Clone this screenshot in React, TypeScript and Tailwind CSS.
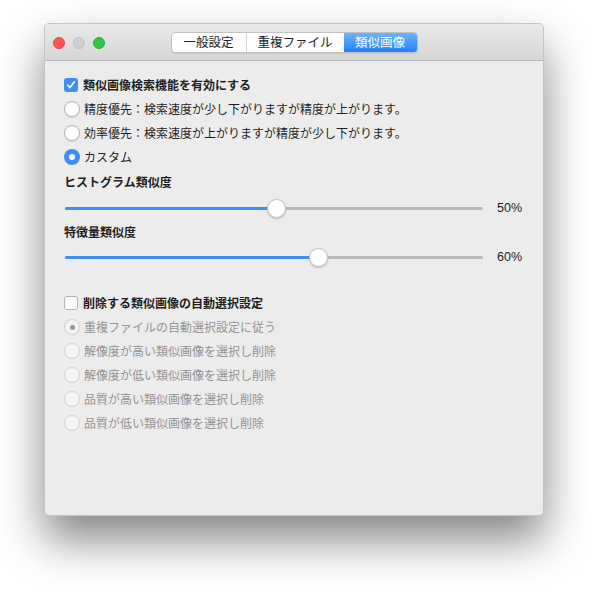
import { useState } from 'react'

const font = { fontFamily: '"Noto Sans CJK JP", "Liberation Sans", sans-serif' }

function Radio({ checked, disabled }: { checked?: boolean; disabled?: boolean }) {
  if (disabled) {
    return (
      <span className="w-[16px] h-[16px] rounded-full border border-[#d0d0d0] bg-[#f4f4f4] flex items-center justify-center shrink-0">
        {checked && <span className="w-[5px] h-[5px] rounded-full bg-[#969696]" />}
      </span>
    )
  }
  if (checked) {
    return (
      <span className="w-[16px] h-[16px] rounded-full bg-[#3d8ff7] flex items-center justify-center shrink-0">
        <span className="w-[6px] h-[6px] rounded-full bg-white" />
      </span>
    )
  }
  return (
    <span className="w-[16px] h-[16px] rounded-full border border-[#b2b2b2] bg-white shadow-[0_1px_1px_rgba(0,0,0,0.08)] shrink-0" />
  )
}

function Checkbox({ checked }: { checked?: boolean }) {
  if (checked) {
    return (
      <span className="w-[14px] h-[14px] rounded-[3px] bg-[#3d8ff7] flex items-center justify-center shrink-0">
        <svg width="10" height="10" viewBox="0 0 10 10">
          <path d="M1.8 5.2 L4 7.6 L8.4 1.8" stroke="white" strokeWidth="1.6" fill="none" strokeLinecap="round" strokeLinejoin="round" />
        </svg>
      </span>
    )
  }
  return <span className="w-[14px] h-[14px] rounded-[3px] border border-[#b2b2b2] bg-white shrink-0" />
}

function Slider({ value }: { value: number }) {
  return (
    <div className="flex items-center h-[20px]">
      <div className="relative w-[418px] h-[20px] flex items-center">
        <div className="w-full h-[3px] rounded-full bg-[#b9b9b9]" />
        <div className="absolute left-0 h-[3px] rounded-full bg-[#3d8ff7]" style={{ width: `${value}%` }} />
        <div
          className="absolute w-[19px] h-[19px] rounded-full bg-white border border-[#c4c4c4] shadow-[0_1px_2px_rgba(0,0,0,0.2)]"
          style={{ left: `calc(${value}% - 7px)` }}
        />
      </div>
      <span className="ml-[14px] text-[12.5px] text-[#1d1d1d]" style={{ fontFamily: '"Liberation Sans", sans-serif' }}>
        {value}%
      </span>
    </div>
  )
}

export default function App() {
  const [tab] = useState('類似画像')
  const tabs = ['一般設定', '重複ファイル', '類似画像']

  return (
    <div className="w-[592px] h-[598px] bg-white pt-[23px] pl-[44px]" style={font}>
      <div className="w-[500px] h-[493px] rounded-[5px] bg-[#ececec] border border-[#c4c4c4] shadow-[0_24px_45px_rgba(0,0,0,0.48)] overflow-hidden flex flex-col">
        {/* title bar */}
        <div className="relative h-[37px] shrink-0 bg-gradient-to-b from-[#ebebeb] to-[#d5d5d5] border-b border-[#b8b8b8] flex items-center justify-center">
          <div className="absolute left-[8px] top-[13px] flex gap-[8px]">
            <span className="w-[12px] h-[12px] rounded-full bg-[#fc5753] border border-[#e0443e]" />
            <span className="w-[12px] h-[12px] rounded-full bg-[#d0d0d0] border border-[#c0c0c0]" />
            <span className="w-[12px] h-[12px] rounded-full bg-[#33c748] border border-[#27aa35]" />
          </div>
          <div className="flex h-[21px] rounded-[4px] border border-[#c2c2c2] bg-white shadow-[0_1px_1px_rgba(0,0,0,0.08)] overflow-hidden mt-[1px]">
            {tabs.map((t, i) => (
              <div
                key={t}
                className={`flex items-center justify-center text-[12.5px] ${
                  i === 0 ? 'w-[74px]' : i === 1 ? 'w-[98px] border-l border-[#d6d6d6]' : 'w-[73px]'
                } ${tab === t ? 'bg-gradient-to-b from-[#6cb3fa] to-[#1a82fb] text-white' : 'text-[#222]'}`}
              >
                {t}
              </div>
            ))}
          </div>
        </div>

        {/* content */}
        <div className="pl-[19px] pt-[17px] text-[12px] text-[#1e1e1e]">
          <label className="flex items-center gap-[5px] h-[14px] font-bold">
            <Checkbox checked />
            <span>類似画像検索機能を有効にする</span>
          </label>
          <div className="mt-[9px] flex flex-col gap-[8px]">
            <div className="flex items-center gap-[4px] h-[16px]">
              <Radio />
              <span>精度優先：検索速度が少し下がりますが精度が上がります。</span>
            </div>
            <div className="flex items-center gap-[4px] h-[16px]">
              <Radio />
              <span>効率優先：検索速度が上がりますが精度が少し下がります。</span>
            </div>
            <div className="flex items-center gap-[4px] h-[16px]">
              <Radio checked />
              <span>カスタム</span>
            </div>
          </div>

          <div className="mt-[9px] font-bold h-[16px] flex items-center">ヒストグラム類似度</div>
          <div className="mt-[8px] ml-[1px]">
            <Slider value={50} />
          </div>
          <div className="mt-[6px] font-bold h-[16px] flex items-center">特徴量類似度</div>
          <div className="mt-[7px] ml-[1px]">
            <Slider value={60} />
          </div>

          <label className="mt-[29px] flex items-center gap-[5px] h-[14px] font-bold">
            <Checkbox />
            <span>削除する類似画像の自動選択設定</span>
          </label>
          <div className="mt-[9px] flex flex-col gap-[8px] text-[#939393]">
            {[
              '重複ファイルの自動選択設定に従う',
              '解像度が高い類似画像を選択し削除',
              '解像度が低い類似画像を選択し削除',
              '品質が高い類似画像を選択し削除',
              '品質が低い類似画像を選択し削除',
            ].map((t, i) => (
              <div key={t} className="flex items-center gap-[4px] h-[16px]">
                <Radio disabled checked={i === 0} />
                <span>{t}</span>
              </div>
            ))}
          </div>
        </div>
      </div>
    </div>
  )
}
